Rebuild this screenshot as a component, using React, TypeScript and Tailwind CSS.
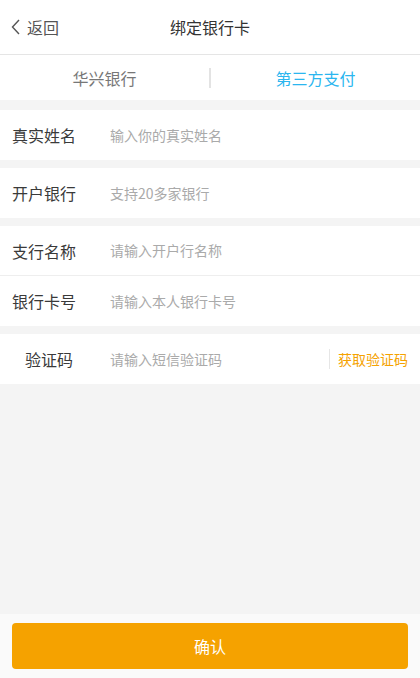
import { useState } from 'react';

const font = { fontFamily: '"Noto Sans CJK SC", "Noto Sans", sans-serif' };

// Single form row: label + input
function FormRow({
  label,
  placeholder,
  border,
  labelRight,
  children,
}: {
  label: string;
  placeholder: string;
  border?: boolean;
  labelRight?: boolean;
  children?: React.ReactNode;
}) {
  return (
    <div className={`flex h-[50px] items-center bg-white ${border ? 'border-b border-[#eeeeee]' : ''}`}>
      <div
        className={`w-[76px] shrink-0 whitespace-nowrap pl-3 text-[16px] text-[#3a3a3a] ${labelRight ? 'pr-[3px] text-right' : ''}`}
      >
        {label}
      </div>
      <input
        className="ml-[34px] min-w-0 flex-1 bg-transparent text-[14px] text-[#333] outline-none placeholder:text-[#aaaaaa]"
        placeholder={placeholder}
        style={font}
      />
      {children}
    </div>
  );
}

export default function App() {
  const [tab, setTab] = useState(1);

  return (
    <div className="flex h-[678px] w-full flex-col bg-[#f4f4f4]" style={font}>
      {/* Header */}
      <div className="relative flex h-[55px] shrink-0 items-center justify-center border-b border-[#e5e5e5] bg-white">
        <button className="absolute left-[10px] top-0 flex h-full items-center gap-[5px] text-[16px] text-[#555555]">
          <svg width="12" height="18" viewBox="0 0 12 18" fill="none">
            <path d="M9 2 L2.5 9 L9 16" stroke="#555" strokeWidth="1.4" />
          </svg>
          <span>返回</span>
        </button>
        <h1 className="text-[16px] text-[#333333]">绑定银行卡</h1>
      </div>

      {/* Tabs */}
      <div className="flex h-[45px] shrink-0 items-center bg-white">
        <button
          onClick={() => setTab(0)}
          className={`flex-1 text-[16px] ${tab === 0 ? 'text-[#2bb6ef]' : 'text-[#777777]'}`}
        >
          华兴银行
        </button>
        <div className="h-[20px] w-[2px] bg-[#e3e3e3]"></div>
        <button
          onClick={() => setTab(1)}
          className={`flex-1 text-[16px] ${tab === 1 ? 'text-[#2bb6ef]' : 'text-[#777777]'}`}
        >
          第三方支付
        </button>
      </div>

      <div className="mt-[10px] flex flex-col gap-[8px]">
        <FormRow label="真实姓名" placeholder="输入你的真实姓名" />
        <FormRow label="开户银行" placeholder="支持20多家银行" />
        <div>
          <FormRow label="支行名称" placeholder="请输入开户行名称" border />
          <FormRow label="银行卡号" placeholder="请输入本人银行卡号" />
        </div>
        <FormRow label="验证码" placeholder="请输入短信验证码" labelRight>
          <div className="h-[20px] w-px bg-[#e6e6e6]"></div>
          <button className="px-2 pr-3 text-[14px] text-[#f5a200]">获取验证码</button>
        </FormRow>
      </div>

      <div className="flex-1"></div>

      {/* Bottom bar */}
      <div className="shrink-0 bg-[#fafafa] px-3 pb-[9px] pt-[9px]">
        <button className="h-[46px] w-full rounded-[4px] bg-[#f5a200] text-[16px] text-white">确认</button>
      </div>
    </div>
  );
}
